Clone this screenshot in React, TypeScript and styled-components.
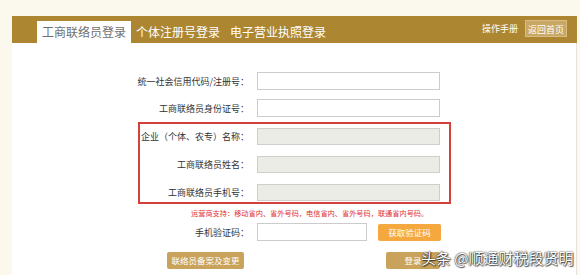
import React from "react";
import styled, { createGlobalStyle } from "styled-components";

const GlobalStyle = createGlobalStyle`
  html, body {
    margin: 0;
    padding: 0;
    height: 100%;
    overflow: hidden;
    background: #fbf8ee;
    font-family: "Noto Sans CJK SC", "Noto Sans", sans-serif;
  }
  #root {
    height: 100%;
  }
`;

const tabs = ["工商联络员登录", "个体注册号登录", "电子营业执照登录"];

export default function App() {
  return (
    <>
      <GlobalStyle />
      <Page>
        <Header>
          <TabList>
            {tabs.map((t, i) => (
              <Tab key={t} $active={i === 0}>
                {t}
              </Tab>
            ))}
          </TabList>
          <HeaderRight>
            <ManualLink>操作手册</ManualLink>
            <HomeButton>返回首页</HomeButton>
          </HeaderRight>
        </Header>
        <Panel>
          <Row $labelWidth={237}>
            <Label>统一社会信用代码/注册号：</Label>
            <TextInput />
          </Row>
          <Row $labelWidth={237}>
            <Label>工商联络员身份证号：</Label>
            <TextInput />
          </Row>
          <HighlightBox>
            <Row $labelWidth={109} $inner>
              <Label>企业（个体、农专）名称：</Label>
              <TextInput $readOnly readOnly />
            </Row>
            <Row $labelWidth={109} $inner>
              <Label>工商联络员姓名：</Label>
              <TextInput $readOnly readOnly />
            </Row>
            <Row $labelWidth={109} $inner>
              <Label>工商联络员手机号：</Label>
              <TextInput $readOnly readOnly />
            </Row>
          </HighlightBox>
          <Notice>运营商支持：移动省内、省外号码，电信省内、省外号码，联通省内号码。</Notice>
          <Row $labelWidth={237}>
            <Label>手机验证码：</Label>
            <CodeRow>
              <TextInput $width={110} />
              <CodeButton>获取验证码</CodeButton>
            </CodeRow>
          </Row>
          <ButtonRow>
            <GoldButton $width={77}>联络员备案及变更</GoldButton>
            <GoldButton $width={54}>登录</GoldButton>
          </ButtonRow>
          <Watermark>头条 @顺通财税段贤明</Watermark>
        </Panel>
      </Page>
    </>
  );
}

const Page = styled.div`
  display: flex;
  flex-direction: column;
  height: 100%;
  padding: 16px 3px 0 12px;
  box-sizing: border-box;
`;

const Header = styled.div`
  display: flex;
  align-items: center;
  justify-content: space-between;
  height: 27px;
  background: #ad8632;
  padding: 0 10px 0 25px;
`;

const TabList = styled.div`
  display: flex;
  align-self: flex-end;
`;

const Tab = styled.div<{ $active?: boolean }>`
  height: 22px;
  line-height: 22px;
  padding: 0 5px;
  font-size: 12px;
  color: ${(p) => (p.$active ? "#707070" : "#ffffff")};
  background: ${(p) => (p.$active ? "#ffffff" : "transparent")};
  white-space: nowrap;
`;

const HeaderRight = styled.div`
  display: flex;
  align-items: center;
  gap: 7px;
`;

const ManualLink = styled.span`
  font-size: 9px;
  color: #ffffff;
  margin-top: -2px;
`;

const HomeButton = styled.div`
  width: 42px;
  height: 17px;
  line-height: 17px;
  box-sizing: border-box;
  text-align: center;
  font-size: 9px;
  color: #ffffff;
  background: #c9a866;
  border: 1px solid #d8bd83;
  margin-top: -2px;
`;

const Panel = styled.div`
  position: relative;
  flex: 1;
  background: #ffffff;
  border-right: 1px solid #e6e3dc;
  padding-top: 29px;
  display: flex;
  flex-direction: column;
`;

const Row = styled.div<{ $labelWidth: number; $inner?: boolean }>`
  display: grid;
  grid-template-columns: ${(p) => p.$labelWidth}px auto;
  column-gap: 8px;
  align-items: center;
  height: ${(p) => (p.$inner ? 17 : 18)}px;
  margin-bottom: ${(p) => (p.$inner ? 11 : 9)}px;
  &:last-child {
    margin-bottom: ${(p) => (p.$inner ? 0 : 9)}px;
  }
`;

const Label = styled.label`
  text-align: right;
  font-size: 9px;
  color: #333333;
  white-space: nowrap;
`;

const TextInput = styled.input<{ $readOnly?: boolean; $width?: number }>`
  width: ${(p) => p.$width ?? 183}px;
  height: 100%;
  box-sizing: border-box;
  margin: 0;
  padding: 0 4px;
  border: 1px solid ${(p) => (p.$readOnly ? "#cfcfca" : "#cccccc")};
  background: ${(p) => (p.$readOnly ? "#ecece7" : "#ffffff")};
  outline: none;
`;

const HighlightBox = styled.div`
  width: 313px;
  box-sizing: border-box;
  margin: -4px 0 0 126px;
  border: 2px solid #d4403a;
  padding: 4px 0 1px;
`;

const Notice = styled.div`
  margin: 4px 0 5px 179px;
  height: 10px;
  line-height: 10px;
  font-size: 7.2px;
  color: #e2312e;
  white-space: nowrap;
`;

const CodeRow = styled.div`
  display: flex;
  align-items: center;
  gap: 11px;
  height: 100%;
`;

const CodeButton = styled.div`
  width: 63px;
  height: 17px;
  line-height: 17px;
  text-align: center;
  font-size: 8.5px;
  color: #ffffff;
  background: #f5a83e;
  border-radius: 2px;
`;

const ButtonRow = styled.div`
  display: flex;
  gap: 142px;
  margin: 2px 0 0 155px;
`;

const GoldButton = styled.div<{ $width: number }>`
  width: ${(p) => p.$width}px;
  height: 17px;
  line-height: 17px;
  text-align: center;
  font-size: 8.5px;
  color: #ffffff;
  background: #c9a35c;
  border-radius: 2px;
`;

const Watermark = styled.div`
  position: absolute;
  left: 409px;
  top: 204px;
  font-size: 15px;
  color: #ffffff;
  white-space: nowrap;
  text-shadow: 0 0 1px #222, 0 0 2px rgba(0, 0, 0, 0.7), 1px 1px 1px rgba(0, 0, 0, 0.6);
`;
